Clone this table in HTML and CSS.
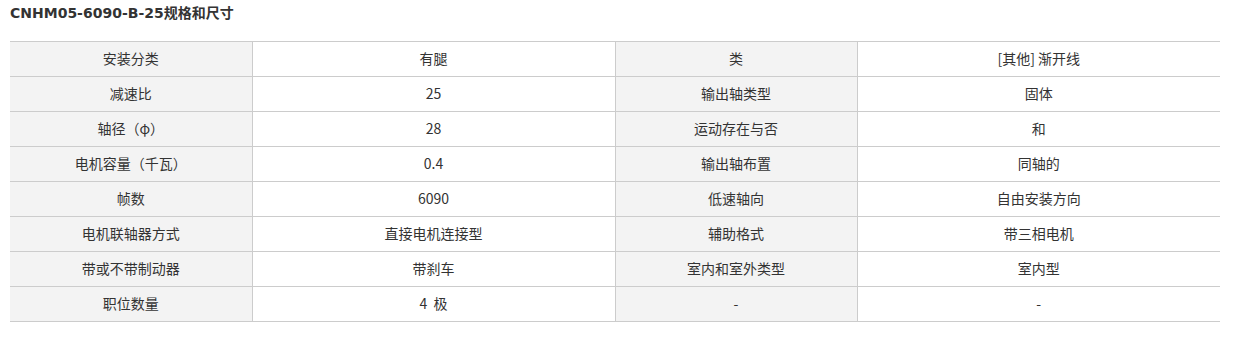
FILE: index.html
```html
<!DOCTYPE html>
<html lang="zh-CN">
<head>
<meta charset="utf-8">
<title>CNHM05-6090-B-25规格和尺寸</title>
<link rel="stylesheet" href="styles.css">
</head>
<body>
<div class="page">
  <h2 class="title">CNHM05-6090-B-25规格和尺寸</h2>
  <table class="spec">
    <colgroup>
      <col class="c-key"><col class="c-val"><col class="c-key"><col class="c-val">
    </colgroup>
    <tbody>
      <tr><th>安装分类</th><td>有腿</td><th>类</th><td>[其他] 渐开线</td></tr>
      <tr><th>减速比</th><td>25</td><th>输出轴类型</th><td>固体</td></tr>
      <tr><th>轴径（φ）</th><td>28</td><th>运动存在与否</th><td>和</td></tr>
      <tr><th>电机容量（千瓦）</th><td>0.4</td><th>输出轴布置</th><td>同轴的</td></tr>
      <tr><th>帧数</th><td>6090</td><th>低速轴向</th><td>自由安装方向</td></tr>
      <tr><th>电机联轴器方式</th><td>直接电机连接型</td><th>辅助格式</th><td>带三相电机</td></tr>
      <tr><th>带或不带制动器</th><td>带刹车</td><th>室内和室外类型</th><td>室内型</td></tr>
      <tr><th>职位数量</th><td>4&nbsp;&nbsp;极</td><th>-</th><td>-</td></tr>
    </tbody>
  </table>
</div>
</body>
</html>
```
FILE: styles.css
```css
html, body {
  margin: 0;
  padding: 0;
  background: #fff;
}
body {
  font-family: "DejaVu Sans", "Noto Sans CJK SC", sans-serif;
  color: #333;
}
.page {
  padding: 5px 37px 0 10px;
}
.title {
  margin: 0 0 20px 0;
  font-size: 14px;
  font-weight: bold;
  line-height: 16px;
  color: #333;
}
.spec {
  width: 100%;
  border-collapse: collapse;
  table-layout: fixed;
  font-family: "Noto Sans CJK SC", sans-serif;
  font-size: 14px;
  line-height: 16px;
}
.c-key { width: 242px; }
.c-val { width: 363px; }
.spec th, .spec td {
  height: 32px;
  padding: 0 0 2px 0;
  text-align: center;
  vertical-align: middle;
  font-weight: normal;
  border: 1px solid #ccc;
  color: #333;
}
.spec th { background: #f3f3f3; }
.spec td { background: #fff; }
.spec tr > :first-child { border-left: none; }
.spec tr > :last-child { border-right: none; }
```
